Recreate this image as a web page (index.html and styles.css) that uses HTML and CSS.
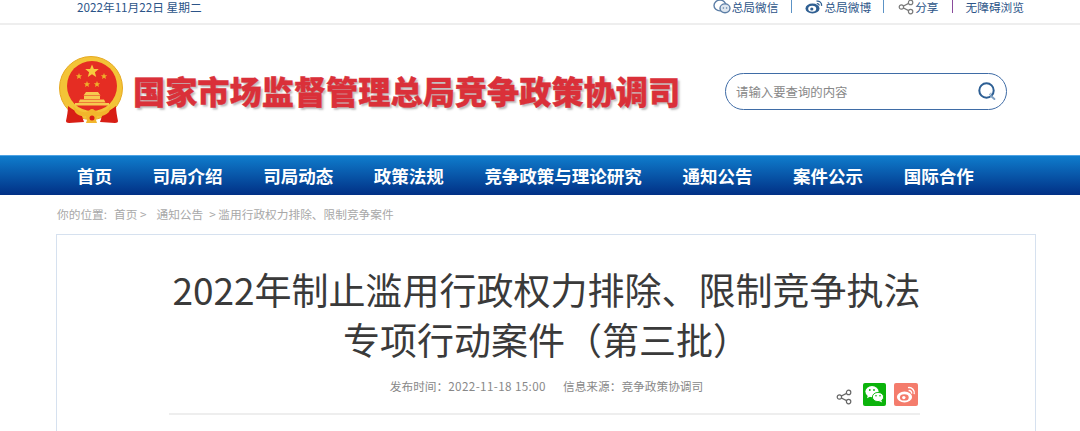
FILE: index.html
```html
<!DOCTYPE html>
<html lang="zh-CN">
<head>
  <meta charset="UTF-8" />
  <meta name="viewport" content="width=device-width, initial-scale=1.0" />
  <title>2022年制止滥用行政权力排除、限制竞争执法专项行动案件（第三批）</title>
  <link rel="stylesheet" href="styles.css">
</head>
<body>
  <div class="top-bar">
    <span class="top-date">2022年11月22日 星期二</span>
    <div class="top-links">
      <a class="top-link">
        <svg class="top-icon" viewBox="0 0 18 15" width="18" height="15">
          <ellipse cx="7" cy="6.5" rx="6" ry="5.4" fill="#fff" stroke="#5c7ea6" stroke-width="1.4"/>
          <ellipse cx="12" cy="9.3" rx="5" ry="4.4" fill="#dfe7f0" stroke="#5c7ea6" stroke-width="1.4"/>
          <circle cx="10.4" cy="9" r=".8" fill="#5c7ea6"/><circle cx="13.6" cy="9" r=".8" fill="#5c7ea6"/>
        </svg>
        总局微信
      </a>
      <i class="sep sep-blue"></i>
      <a class="top-link">
        <svg class="top-icon" viewBox="0 0 18 15" width="18" height="15">
          <ellipse cx="7.5" cy="9.5" rx="7" ry="5" fill="#2f5f92"/>
          <ellipse cx="7.2" cy="9.8" rx="4" ry="3" fill="#fff"/>
          <circle cx="6.8" cy="10" r="1.6" fill="#2f5f92"/>
          <path d="M11.5 2.2a4 4 0 0 1 5 4.6M11.8 4.6a2 2 0 0 1 2.4 2" fill="none" stroke="#2f5f92" stroke-width="1.3"/>
        </svg>
        总局微博
      </a>
      <i class="sep sep-blue sep-wide"></i>
      <a class="top-link">
        <svg class="top-icon" viewBox="0 0 16 16" width="16" height="16">
          <path d="M12.6 3.4 3.6 8l9 4.6" fill="none" stroke="#7a7a7a" stroke-width="1.2"/>
          <circle cx="12.6" cy="3.4" r="2.2" fill="#fff" stroke="#7a7a7a" stroke-width="1.2"/>
          <circle cx="3.4" cy="8" r="2.2" fill="#fff" stroke="#7a7a7a" stroke-width="1.2"/>
          <circle cx="12.6" cy="12.6" r="2.2" fill="#fff" stroke="#7a7a7a" stroke-width="1.2"/>
        </svg>
        分享
      </a>
      <i class="sep sep-purple"></i>
      <a class="top-link">无障碍浏览</a>
    </div>
  </div>

  <header class="header">
    <div class="brand">
      <svg class="emblem" viewBox="0 0 64 68" width="64" height="68">
        <circle cx="32" cy="32" r="31.5" fill="#f3c437" stroke="#e6a921" stroke-width="1"/>
        <circle cx="33" cy="30" r="25" fill="#e52d23"/>
        <polygon points="33,8.500 34.900,13 39.800,13 35.900,16.200 37.200,21 33,18.300 28.800,21 30.100,16.200 26.200,13 31.100,13" fill="#f7ca3e"/>
        <polygon points="20,17 20.900,19.200 23.200,19.200 21.400,20.700 22,23 20,21.700 18,23 18.600,20.700 16.800,19.200 19.100,19.200" fill="#eeb02b"/>
        <polygon points="45,17 45.900,19.200 48.200,19.200 46.400,20.700 47,23 45,21.700 43,23 43.600,20.700 41.800,19.200 44.100,19.200" fill="#eeb02b"/>
        <polygon points="28,25 28.900,27.200 31.200,27.200 29.400,28.700 30,31 28,29.700 26,31 26.600,28.700 24.800,27.200 27.100,27.200" fill="#eeb02b"/>
        <polygon points="38,25 38.900,27.200 41.200,27.200 39.400,28.700 40,31 38,29.700 36,31 36.600,28.700 34.800,27.200 37.100,27.200" fill="#eeb02b"/>
        <path d="M27 36h12l2.500 3.500H24.500zM25 40h16v3H25zM21 43.500h24l1.500 3H19.500zM16 47h34v2.500H16z" fill="#f7c94f"/>
        <path d="M9 50c4 3 8 6 13 7l3 9-15 1c-2 0-3-1-3-2 1-5 2-10 2-15zM57 50c-4 3-8 6-13 7l-3 9 15 1c2 0 3-1 3-2-1-5-2-10-2-15z" fill="#d81e15"/>
        <path d="M14 50c5 5 10 7 14 6 2-1 3-3 5-3s3 2 5 3c4 1 9-1 14-6l-2 6c-4 4-9 5-12 4l-1 4 1 3H27l1-3-1-4c-3 1-8 0-11-4z" fill="#f2b62c"/>
        <circle cx="33" cy="62" r="2.500" fill="#d81e15"/>
      </svg>
      <h1 class="site-name">国家市场监督管理总局竞争政策协调司</h1>
    </div>
    <form class="search">
      <input class="search-input" type="text" placeholder="请输入要查询的内容">
      <svg class="search-icon" viewBox="0 0 20 20" width="20" height="20">
        <circle cx="9.500" cy="9.500" r="7.200" fill="none" stroke="#2d5f94" stroke-width="2"/>
        <path d="M12 13.600c1.200-.2 2-.9 2.400-1.900" fill="none" stroke="#9fb7d0" stroke-width="1.400"/>
        <path d="M14 15l3.400 3" stroke="#7fa0c2" stroke-width="2" stroke-linecap="round"/>
      </svg>
    </form>
  </header>

  <nav class="nav">
    <a class="nav-item">首页</a>
    <a class="nav-item">司局介绍</a>
    <a class="nav-item">司局动态</a>
    <a class="nav-item">政策法规</a>
    <a class="nav-item">竞争政策与理论研究</a>
    <a class="nav-item">通知公告</a>
    <a class="nav-item">案件公示</a>
    <a class="nav-item">国际合作</a>
  </nav>

  <div class="crumbs">
    <span>你的位置:</span>
    <a class="crumb-first">首页 &gt;</a>
    <a class="crumb-second">通知公告</a>
    <span class="crumb-last">&gt; 滥用行政权力排除、限制竞争案件</span>
  </div>

  <main class="card">
    <h2 class="article-title">2022年制止滥用行政权力排除、限制竞争执法<br>专项行动案件（第三批）</h2>
    <div class="meta">
      <div class="meta-text">
        <span>发布时间：<span class="meta-date">2022-11-18 15:00</span></span>
        <span>信息来源：竞争政策协调司</span>
      </div>
      <div class="meta-share">
        <svg class="share-icon" viewBox="0 0 16 16" width="16" height="16">
          <path d="M12.600 3.400 3.400 8l9.200 4.600" fill="none" stroke="#666" stroke-width="1.200"/>
          <circle cx="12.600" cy="3.400" r="2.200" fill="#fff" stroke="#666" stroke-width="1.200"/>
          <circle cx="3.400" cy="8" r="2.200" fill="#fff" stroke="#666" stroke-width="1.200"/>
          <circle cx="12.600" cy="12.600" r="2.200" fill="#fff" stroke="#666" stroke-width="1.200"/>
        </svg>
        <span class="share-btn share-wechat">
          <svg viewBox="0 0 23 23" width="23" height="23">
            <ellipse cx="9" cy="8.600" rx="6.600" ry="5.600" fill="#fff"/>
            <path d="M5 12l-1 3.200 3.400-1.800z" fill="#fff"/>
            <ellipse cx="15" cy="14" rx="5.600" ry="4.600" fill="#fff" stroke="#0bb30b" stroke-width=".9"/>
            <path d="M18 17l1.200 2.600-3.200-1.600z" fill="#fff"/>
            <circle cx="6.800" cy="7" r=".9" fill="#0bb30b"/><circle cx="11" cy="7" r=".9" fill="#0bb30b"/>
            <circle cx="13" cy="12.800" r=".8" fill="#0bb30b"/><circle cx="17" cy="12.800" r=".8" fill="#0bb30b"/>
          </svg>
        </span>
        <span class="share-btn share-weibo">
          <svg viewBox="0 0 24 23" width="24" height="23">
            <ellipse cx="10.500" cy="14" rx="7.600" ry="5.400" fill="#fff"/>
            <ellipse cx="10.300" cy="14.400" rx="4.400" ry="3.200" fill="#f47c6c"/>
            <circle cx="9.800" cy="14.600" r="1.700" fill="#fff"/>
            <path d="M14 4.600a5.400 5.400 0 0 1 6.200 6.600M14.600 7.600a2.600 2.600 0 0 1 3 3" fill="none" stroke="#fff" stroke-width="1.400"/>
          </svg>
        </span>
      </div>
    </div>
  </main>
</body>
</html>
```

FILE: styles.css
```css
body, html {
  margin: 0;
  height: 100%;
  overflow: hidden;
  background: #fff;
  font-family: "Noto Sans CJK SC", "Open Sans", sans-serif;
}
a {
  color: inherit;
  text-decoration: none;
}
.top-bar {
  height: 13px;
  border-bottom: 2px solid #eee;
  padding: 0 56px 10px 77px;
  display: flex;
  justify-content: space-between;
  align-items: center;
  font-size: 11.7px;
  color: #2c5488;
}
.top-links {
  display: flex;
  align-items: center;
}
.top-link {
  display: flex;
  align-items: center;
  gap: 1px;
}
.top-icon {
  flex: none;
}
.sep {
  width: 1px;
  height: 13px;
  margin: 0 13px;
}
.sep-wide {
  margin: 0 14px 0 12px;
}
.sep-blue {
  background: #5c93c6;
}
.sep-purple {
  background: #8a4b9c;
}

.header {
  height: 130px;
  padding: 0 73px 0 59px;
  display: flex;
  justify-content: space-between;
  align-items: center;
}
.brand {
  display: flex;
  align-items: center;
  gap: 10px;
}
.emblem {
  flex: none;
}
.site-name {
  margin: 0;
  font-size: 32.2px;
  line-height: 40px;
  font-weight: 900;
  color: #da3039;
  -webkit-text-stroke: .4px #da3039;
  text-shadow: 2px 2px 2px rgba(90, 90, 90, .4);
  white-space: nowrap;
}
.search {
  width: 282px;
  height: 37px;
  margin-top: 2px;
  box-sizing: border-box;
  border: 1px solid #3f6ca6;
  border-radius: 19px;
  padding: 0 9px 0 10px;
  display: flex;
  align-items: center;
}
.search-input {
  flex: 1;
  min-width: 0;
  border: none;
  outline: none;
  padding: 2px 0 0;
  background: none;
  font: 12.4px "Noto Sans CJK SC", sans-serif;
}
.search-input::placeholder {
  color: #888;
}

.nav {
  height: 40px;
  box-sizing: border-box;
  padding: 0 0 1px 77px;
  display: flex;
  align-items: center;
  gap: 40.6px;
  border-top: 1px solid #4ea3e4;
  background: linear-gradient(#0f7ccc, #013085);
}
.nav-item {
  font-size: 17.5px;
  font-weight: 700;
  color: #fff;
  white-space: nowrap;
}

.crumbs {
  height: 39px;
  box-sizing: border-box;
  padding: 10px 0 0 57px;
  display: flex;
  font-size: 11.7px;
  line-height: 17px;
  color: #a8a8a8;
}
.crumb-first {
  margin-left: 7px;
}
.crumb-second {
  margin-left: 10px;
}
.crumb-last {
  margin-left: 6px;
}

.card {
  margin: 0 44px 0 56px;
  height: 197px;
  box-sizing: border-box;
  border: 1px solid #d6e1ef;
  border-bottom: none;
  padding: 29px 111px 0 112px;
}
.article-title {
  margin: 0;
  font-size: 37px;
  line-height: 50px;
  font-weight: 400;
  color: #3a3a3a;
  text-align: center;
  white-space: nowrap;
}
.meta {
  position: relative;
  height: 36px;
  margin: 13px 4px 0 0;
  border-bottom: 2px solid #eee;
}
.meta-text {
  display: flex;
  justify-content: center;
  gap: 17px;
  padding-left: 4px;
  font-size: 11.7px;
  line-height: 18px;
  color: #888;
}
.meta-date {
  letter-spacing: .37px;
}
.meta-share {
  position: absolute;
  right: 2px;
  top: 6px;
  display: flex;
  align-items: center;
  gap: 8px;
}
.share-icon {
  margin: 5px 3px 0 0;
}
.share-btn {
  display: block;
  height: 23px;
  border-radius: 2px;
}
.share-btn svg {
  display: block;
}
.share-wechat {
  background: #0bb30b;
}
.share-weibo {
  background: #f47c6c;
}
```
